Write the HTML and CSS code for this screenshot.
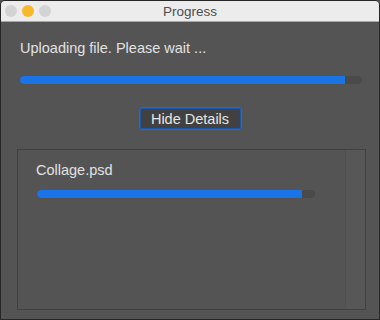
FILE: index.html
```html
<!DOCTYPE html>
<html lang="en">
<head>
  <meta charset="UTF-8">
  <title>Progress</title>
  <link rel="stylesheet" href="styles.css">
</head>
<body>
  <div class="window">
    <div class="titlebar">
      <div class="lights">
        <span class="light"></span>
        <span class="light yellow"></span>
        <span class="light"></span>
      </div>
      <div class="title">Progress</div>
    </div>
    <div class="content">
      <div class="label">Uploading file. Please wait ...</div>
      <div class="progress main-progress"><div class="fill" style="width: 95%"></div></div>
      <button class="details-btn">Hide Details</button>
      <div class="details">
        <div class="file-list">
          <div class="file-name">Collage.psd</div>
          <div class="progress file-progress"><div class="fill" style="width: 95.3%"></div></div>
        </div>
        <div class="scroll-track"></div>
      </div>
    </div>
  </div>
</body>
</html>
```

FILE: styles.css
```css
body {
  margin: 0;
  background-color: #545454;
  font-family: 'Liberation Sans', Arial, sans-serif;
}
.window {
  box-sizing: border-box;
  width: 380px;
  height: 320px;
  border: 1px solid #262626;
  border-radius: 5px 5px 0 0;
  background-color: #545454;
  display: flex;
  flex-direction: column;
  overflow: hidden;
}
.titlebar {
  height: 20px;
  background-color: #ececec;
  border-bottom: 1px solid #a8a8a8;
  display: flex;
  align-items: center;
  position: relative;
}
.lights {
  display: flex;
  gap: 5px;
  padding-left: 4px;
}
.light {
  width: 12px;
  height: 12px;
  border-radius: 50%;
  background-color: #d3d3d3;
}
.light.yellow {
  background-color: #f7b92c;
}
.title {
  position: absolute;
  left: 0;
  right: 0;
  text-align: center;
  font-size: 13.5px;
  color: #4c4c4c;
}
.content {
  flex: 1;
  display: flex;
  flex-direction: column;
  padding: 18px 0 9px 0;
}
.label {
  margin-left: 19px;
  font-size: 14.5px;
  line-height: 16px;
  color: #e2e2e2;
}
.progress {
  height: 8px;
  border-radius: 4px;
  background-color: #4a4a4a;
  overflow: hidden;
}
.progress .fill {
  height: 100%;
  background-color: #1a74e8;
  border-radius: 4px 0 0 4px;
}
.main-progress {
  margin: 20px 17px 0 19px;
}
.details-btn {
  align-self: center;
  margin-top: 23px;
  width: 103px;
  height: 23px;
  padding: 0;
  background-color: #414141;
  border: 1px solid #2369d0;
  border-radius: 3px;
  box-shadow: inset 0 0 0 1px #1b58b0;
  color: #e6e6e6;
  font-family: inherit;
  font-size: 14.5px;
}
.details {
  flex: 1;
  margin: 19px 13px 0 16px;
  border: 1px solid #414141;
  display: flex;
}
.file-list {
  flex: 1;
  padding: 12px 30px 0 18px;
}
.file-name {
  font-size: 14.5px;
  line-height: 16px;
  color: #e2e2e2;
}
.file-progress {
  margin: 12px 0 0 1px;
}
.scroll-track {
  width: 19px;
  background-color: #575757;
  border-left: 1px solid #505050;
}
```
